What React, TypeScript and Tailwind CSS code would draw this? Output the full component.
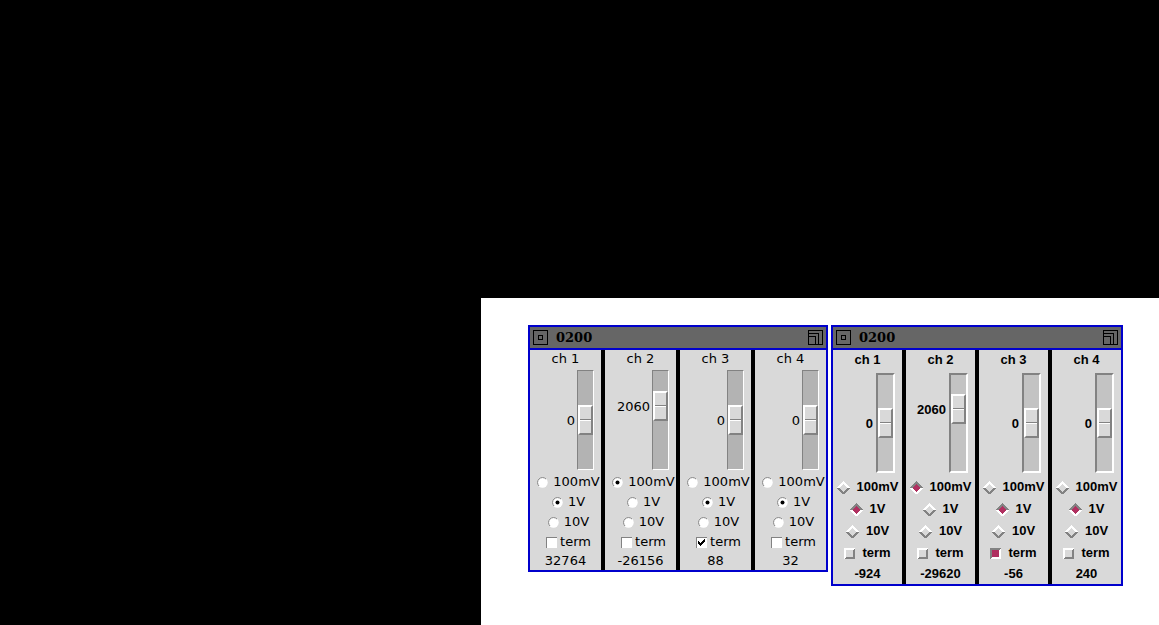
import { useId, useState } from "react";

type Look = "modern" | "motif";
type Channel = { name: string; offset: number; range: string; term: boolean; reading: string };

const RANGES = ["100mV", "1V", "10V"];

const modernChannels: Channel[] = [
  { name: "ch 1", offset: 0, range: "1V", term: false, reading: "32764" },
  { name: "ch 2", offset: 2060, range: "100mV", term: false, reading: "-26156" },
  { name: "ch 3", offset: 0, range: "1V", term: true, reading: "88" },
  { name: "ch 4", offset: 0, range: "1V", term: false, reading: "32" },
];

const motifChannels: Channel[] = [
  { name: "ch 1", offset: 0, range: "1V", term: false, reading: "-924" },
  { name: "ch 2", offset: 2060, range: "100mV", term: false, reading: "-29620" },
  { name: "ch 3", offset: 0, range: "1V", term: true, reading: "-56" },
  { name: "ch 4", offset: 0, range: "1V", term: false, reading: "240" },
];

const LIMIT = 5000;

function RoundMark({ on }: { on: boolean }) {
  return (
    <svg width="11" height="11" viewBox="0 0 11 11" aria-hidden="true">
      <circle cx="5.5" cy="5.5" r="5.2" fill="#fff" />
      <path d="M2 9A4.9 4.9 0 0 1 9 2" fill="none" stroke="#828282" />
      {on && <circle cx="5.5" cy="5.5" r="2" fill="#000" />}
    </svg>
  );
}

function DiamondMark({ on }: { on: boolean }) {
  return (
    <svg width="13" height="13" viewBox="0 0 13 13" shapeRendering="crispEdges" aria-hidden="true">
      <path
        d="M6 0H7V1H8V2H9V3H10V4H11V5H12V6H13V7H0V6H1V5H2V4H3V3H4V2H5V1H6Z"
        fill={on ? "#828282" : "#fff"}
      />
      <path
        d="M0 7H13V8H12V9H11V10H10V11H9V12H8V13H5V12H4V11H3V10H2V9H1V8H0Z"
        fill={on ? "#fff" : "#828282"}
      />
      <path
        d="M6 3H7V4H8V5H9V6H10V7H10V8H9V9H8V10H7V11H6V10H5V9H4V8H3V6H4V5H5V4H6Z"
        fill={on ? "#b03060" : "#d9d9d9"}
      />
    </svg>
  );
}

function TickMark({ on }: { on: boolean }) {
  return (
    <svg width="11" height="11" viewBox="0 0 11 11" shapeRendering="crispEdges" aria-hidden="true">
      <path d="M0 0H11V11H0Z" fill="#fff" />
      <path d="M0 0H11V1H1V11H0Z" fill="#828282" />
      {on && <path d="M2 4H3V5H4V6H5V5H6V4H7V3H8V2H9V5H8V6H7V7H6V8H5V9H4V8H3V7H2Z" fill="#000" />}
    </svg>
  );
}

function BevelMark({ on }: { on: boolean }) {
  return (
    <svg width="11" height="11" viewBox="0 0 11 11" shapeRendering="crispEdges" aria-hidden="true">
      <path d="M0 0H11L0 11Z" fill={on ? "#828282" : "#fff"} />
      <path d="M11 0V11H0Z" fill={on ? "#fff" : "#828282"} />
      <path d="M2 2H9V9H2Z" fill={on ? "#b03060" : "#d9d9d9"} />
    </svg>
  );
}

function ChannelStrip({ channel, look }: { channel: Channel; look: Look }) {
  const id = useId();
  const [offset, setOffset] = useState(channel.offset);
  const [range, setRange] = useState(channel.range);
  const [term, setTerm] = useState(channel.term);
  const modern = look === "modern";
  const travel = modern ? 68 : 66;
  const labelTop = (modern ? 9 : 10) + Math.round(((LIMIT - offset) / (2 * LIMIT)) * travel);

  return (
    <section className={`flex flex-col items-center bg-[#d9d9d9] ${modern ? "w-[71px]" : "w-[69px]"}`}>
      <h2 id={`${id}-name`} className={modern ? "h-5 leading-[18px]" : "h-[23px] leading-5"}>
        {channel.name}
      </h2>
      <div className={`flex w-full justify-end pr-[7px] ${modern ? "gap-[2px]" : "gap-[3px]"}`}>
        <output htmlFor={`${id}-offset`} className="leading-4" style={{ paddingTop: labelTop }}>
          {offset}
        </output>
        <input
          id={`${id}-offset`}
          aria-labelledby={`${id}-name`}
          type="range"
          min={-LIMIT}
          max={LIMIT}
          step={10}
          value={offset}
          onChange={(e) => setOffset(Number(e.target.value))}
          className={`h-[100px] shrink-0 appearance-none border-t-[#828282] border-r-white border-b-white border-l-[#828282] [direction:rtl] [writing-mode:vertical-lr] [&::-webkit-slider-thumb]:h-[30px] [&::-webkit-slider-thumb]:w-[15px] [&::-webkit-slider-thumb]:appearance-none [&::-webkit-slider-thumb]:border-2 [&::-webkit-slider-thumb]:border-t-white [&::-webkit-slider-thumb]:border-r-[#828282] [&::-webkit-slider-thumb]:border-b-[#828282] [&::-webkit-slider-thumb]:border-l-white [&::-webkit-slider-thumb]:bg-[linear-gradient(#d9d9d9_12px,#828282_12px,#828282_13px,#fff_13px,#fff_14px,#d9d9d9_14px)] ${
            modern ? "w-[17px] border bg-[#b3b3b3]" : "w-[19px] border-2 bg-[#c3c3c3]"
          }`}
        />
      </div>
      <fieldset
        aria-labelledby={`${id}-name`}
        className={`flex flex-col items-center ${modern ? "pt-0.5" : "pt-[3px]"}`}
      >
        {RANGES.map((r) => (
          <label key={r} className={`flex items-center ${modern ? "h-5 gap-[5px] pl-1.5" : "h-[22px] gap-[7px]"}`}>
            <span className="grid shrink-0 place-items-center">
              <input
                type="radio"
                name={`${id}-range`}
                checked={range === r}
                onChange={() => setRange(r)}
                className="col-start-1 row-start-1 size-[11px] appearance-none"
              />
              <span className="pointer-events-none col-start-1 row-start-1">
                {modern ? <RoundMark on={range === r} /> : <DiamondMark on={range === r} />}
              </span>
            </span>
            {r}
          </label>
        ))}
        <label className={`flex items-center ${modern ? "h-5 gap-[3px] pl-1.5" : "h-[22px] gap-[7px]"}`}>
          <span className="grid shrink-0 place-items-center">
            <input
              type="checkbox"
              checked={term}
              onChange={(e) => setTerm(e.target.checked)}
              className="col-start-1 row-start-1 size-[11px] appearance-none"
            />
            <span className="pointer-events-none col-start-1 row-start-1">
              {modern ? <TickMark on={term} /> : <BevelMark on={term} />}
            </span>
          </span>
          term
        </label>
      </fieldset>
      <p className={modern ? "h-[18px] leading-[18px]" : "h-5 leading-5"}>{channel.reading}</p>
    </section>
  );
}

function ScopeWindow({ title, channels, look }: { title: string; channels: Channel[]; look: Look }) {
  return (
    <article className="border-2 border-[#0000cc]">
      <header className="flex h-[23px] items-center border-b-2 border-[#0000cc] bg-[#666666] px-[3px]">
        <button type="button" aria-label="Window menu">
          <svg width="15" height="15" viewBox="0 0 15 15" fill="none" stroke="#000" shapeRendering="crispEdges">
            <path d="M.5.5H14.5V14.5H.5ZM5.5 5.5H9.5V9.5H5.5Z" />
          </svg>
        </button>
        <h1 className="ml-2 flex-1 font-['DejaVu_Serif',serif] text-[13px] leading-5 font-bold">{title}</h1>
        <button type="button" aria-label="Resize">
          <svg width="15" height="15" viewBox="0 0 15 15" fill="none" stroke="#000" shapeRendering="crispEdges">
            <path d="M.5.5H14.5V14.5H.5ZM.5 3.5H10.5V14.5M.5 6.5H7.5V14.5" />
          </svg>
        </button>
      </header>
      <div
        className={`flex gap-1 bg-black text-[13px] ${
          look === "modern"
            ? "font-['DejaVu_Sans',sans-serif]"
            : "font-['Liberation_Sans',sans-serif] font-bold"
        }`}
      >
        {channels.map((c) => (
          <ChannelStrip key={c.name} channel={c} look={look} />
        ))}
      </div>
    </article>
  );
}

export default function App() {
  return (
    <div className="flex min-h-screen flex-col bg-black pt-[298px] pl-[481px] text-black">
      <main className="flex flex-1 items-start gap-[3px] bg-white pt-[27px] pl-[47px]">
        <ScopeWindow title="0200" channels={modernChannels} look="modern" />
        <ScopeWindow title="0200" channels={motifChannels} look="motif" />
      </main>
    </div>
  );
}
